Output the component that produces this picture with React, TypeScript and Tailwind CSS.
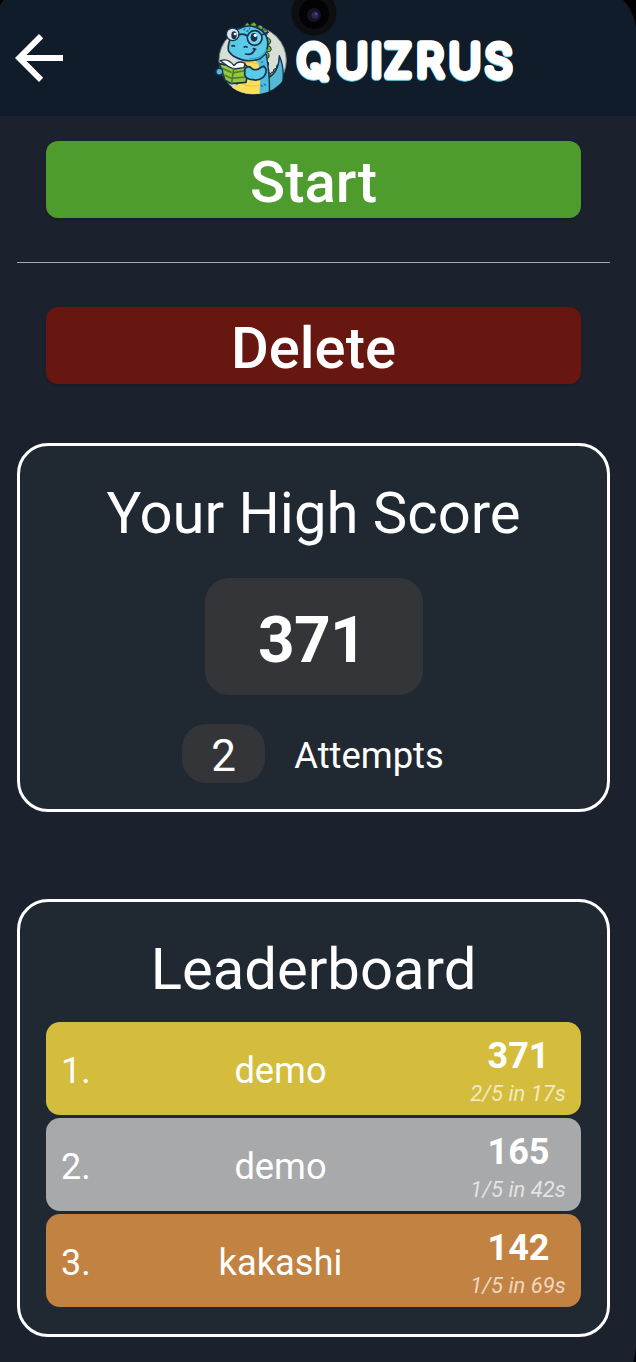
import React from "react";

function Dino() {
  return (
    <svg viewBox="0 0 234 240" className="h-[80px] w-[78px] shrink-0" strokeLinecap="round" strokeLinejoin="round">
      <defs>
        <clipPath id="badge">
          <path d="M0 0H234V120A103 103 0 0 1 125 228A103 103 0 0 1 20 145L0 140Z" />
        </clipPath>
      </defs>
      <circle cx="122" cy="127" r="101" fill="#d8e0d5" stroke="#77818d" strokeWidth="3" />
      <g clipPath="url(#badge)">
        <g fill="#7caf2c" stroke="#17314e" strokeWidth="3">
          <path d="M97 28Q99 14 107 14Q113 16 113 26Q117 12 127 13Q136 17 133 28Q144 17 150 23Q157 29 150 38Q164 31 166 40Q168 50 160 55L150 64L96 39Z" />
          <path d="M158 59Q173 57 176 68Q178 77 166 82Q178 84 178 94Q176 104 164 102Q174 108 171 117Q167 127 158 121V80Z" />
          <path d="M156 127Q170 128 170 138Q169 145 163 147Q174 152 170 163Q179 166 177 174Q174 185 160 180Z" />
          <path d="M174 174Q173 161 183 163Q183 151 193 151Q191 141 202 137L199 171L170 190Z" />
        </g>
        <path d="M202 113C201 148 187 170 168 180L158 225H200C220 190 216 145 202 113Z" fill="#53b9d5" stroke="#17314e" strokeWidth="4" />
        <path d="M98 120C104 160 88 185 72 205V240H171C174 210 172 165 163 109Z" fill="#4fbddb" stroke="#17314e" strokeWidth="4" />
        <path d="M94 130C112 124 128 126 139 134L145 174L142 240H60V208C92 197 105 171 96 130Z" fill="#ffde5b" />
        <path d="M99 133Q119 132 136 137M102 151Q120 151 140 156M96 201Q117 207 141 203" fill="none" stroke="#edbd42" strokeWidth="3" />
        <path d="M81 32C111 15 149 27 163 55C173 77 165 109 144 122C111 136 67 125 50 100C44 75 60 53 67 44Q72 32 81 32Z" fill="#5acbe7" stroke="#17314e" strokeWidth="5" />
        <path d="M113 122Q150 124 163 96" fill="none" stroke="#39a6c8" strokeWidth="5" />
        <circle cx="62" cy="49" r="19" fill="#dde7e9" stroke="#17314e" strokeWidth="4" />
        <circle cx="128" cy="60" r="22" fill="#74d8ec" stroke="#17314e" strokeWidth="5" />
        <path d="M81 51Q94 44 106 54M150 50L168 43" fill="none" stroke="#17314e" strokeWidth="5" />
        <ellipse cx="66" cy="52" rx="8" ry="12" fill="#17314e" />
        <ellipse cx="126" cy="58" rx="10" ry="13" fill="#17314e" />
        <circle cx="69" cy="48" r="4" fill="#fff" />
        <circle cx="130" cy="52" r="5" fill="#fff" />
        <path d="M101 108Q121 113 128 95M124 92L131 94M60 84Q64 82 67 84M97 87Q101 84 105 87" fill="none" stroke="#17314e" strokeWidth="5" />
        <path d="M96 35L98 33M105 40L107 38M112 33L113 31M149 132H151M155 143H156M148 202L150 205M157 199L160 201" stroke="#287b9c" strokeWidth="5" />
      </g>
      <path d="M22 137L39 187L58 197L102 193L110 149L94 136L66 146Z" fill="#93c83c" stroke="#17314e" strokeWidth="5" />
      <path d="M25 128Q48 119 66 143Q79 125 99 136L96 149L66 153L48 145Z" fill="#fff" stroke="#17314e" strokeWidth="4" />
      <path d="M65 151L59 195M29 150L57 163M67 164L107 156M38 172L58 181L101 177" fill="none" stroke="#537f2d" strokeWidth="5" />
      <circle cx="22" cy="161" r="10" fill="#4fbddb" stroke="#17314e" strokeWidth="4" />
      <path d="M99 152Q109 140 120 152Q134 160 147 148Q157 142 162 154C164 176 143 190 122 185Q101 184 98 170Z" fill="#5acbe7" stroke="#17314e" strokeWidth="5" />
    </svg>
  );
}

function WordMark() {
  const letterX = "313.5 352 376.5 398 430 465 498.5";
  return (
    <svg
      viewBox="290 32 230 56"
      className="h-[56px] w-[230px] shrink-0 font-[Inter,sans-serif] text-[43px] font-extralight"
      textAnchor="middle"
      strokeWidth="7.5"
      strokeLinejoin="round"
      strokeLinecap="round"
    >
      <text x={letterX} y="77.4" fill="#65cee0" stroke="#65cee0" aria-hidden="true">QUIZRUS</text>
      <text x={letterX} y="76" fill="#fff" stroke="#fff">QUIZRUS</text>
    </svg>
  );
}

const leaders = [
  { name: "demo", score: 371, detail: "2/5 in 17s", color: "bg-[#d4bc3d]" },
  { name: "demo", score: 165, detail: "1/5 in 42s", color: "bg-[#a7a9ab]" },
  { name: "kakashi", score: 142, detail: "1/5 in 69s", color: "bg-[#c28241]" },
];

export default function App() {
  return (
    <div className="h-[1362px] w-[636px] overflow-hidden font-[Roboto,sans-serif] text-white">
      <main className="relative h-full overflow-hidden bg-[#1b212d]">
        <header className="flex h-[116px] bg-[#101c29] pl-[15px]">
          <button aria-label="Back" className="mt-[34px] h-[48px] w-[48px]">
            <svg viewBox="0 0 48 48" className="h-full w-full"><path d="M48 21H11.5L28.2 4.2L24 0L0 24L24 48L28.2 43.8L11.5 27H48Z" fill="#fff" /></svg>
          </button>
          <div className="ml-[149px] mt-[18px]"><Dino /></div>
          <div className="mt-[32px]"><WordMark /></div>
        </header>
        <svg viewBox="0 0 50 40" className="absolute left-[289px] top-0 h-[40px] w-[50px]">
          <circle cx="25" cy="13" r="22.5" fill="#0d0e10" />
          <circle cx="25" cy="14" r="15" fill="#020304" />
          <circle cx="25" cy="15" r="7" fill="#171421" />
          <circle cx="26" cy="15" r="3.5" fill="#2e2656" />
          <circle cx="27" cy="14" r="1.3" fill="#5842a0" />
        </svg>
        <svg viewBox="0 0 4 6" className="absolute left-0 top-0 h-[6px] w-[4px]"><path d="M0 0H3.5L0 5.5Z" fill="#000" /></svg>
        <svg viewBox="0 0 14 28" className="absolute right-0 top-0 h-[28px] w-[14px]"><path d="M1 0H14V27Q11 9 1 0Z" fill="#000" /></svg>
        <svg viewBox="0 0 4 16" className="absolute bottom-0 right-0 h-[16px] w-[4px]"><path d="M4 0V16H1.5Q3.5 9 4 0Z" fill="#000" /></svg>

        <div className="ml-[17px] flex w-[593px] flex-col">
          <button className="mx-[29px] mt-[24.5px] flex h-[77px] items-center justify-center rounded-[12px] bg-[#4f9c2e] pt-[6px] text-[58px] leading-none font-medium shadow-sm">Start</button>
          <hr className="mt-[44.5px] border-0 border-t border-[#aaa5aa]" />
          <button className="mx-[29px] mt-[44px] flex h-[77px] items-center justify-center rounded-[12px] bg-[#681610] pt-[5px] text-[58px] leading-none font-medium shadow-sm">Delete</button>

          <section className="mt-[59px] flex h-[369px] flex-col items-center rounded-[31px] border-[3px] border-white bg-[#202831]">
            <h1 className="mt-[33px] text-[58px] leading-[68px]">Your High Score</h1>
            <div className="mt-[31px] flex h-[117px] w-[218px] items-center justify-center rounded-[24px] bg-[#333539] pt-[8px] pr-[3px] text-[64px] leading-none font-bold tracking-[-0.8px]">371</div>
            <div className="mt-[29px] flex items-center gap-[29px] pr-px">
              <span className="flex h-[59px] w-[83px] items-center justify-center rounded-[24px] bg-[#333539] pt-[4px] text-[44px] leading-none">2</span>
              <span className="pt-[5px] text-[36.4px] leading-none">Attempts</span>
            </div>
          </section>

          <section className="mt-[87px] h-[438px] rounded-[31px] border-[3px] border-white bg-[#202831] px-[26px]">
            <h2 className="mt-[33px] text-center text-[58px] leading-[68px]">Leaderboard</h2>
            <div className="mt-[19px] flex flex-col gap-[3px]">
              {leaders.map((leader, index) => (
                <div key={index} className={`flex h-[93px] rounded-[14px] ${leader.color}`}>
                  <div className="flex w-[60px] items-center pl-[15px] pt-[5px] text-[36px] leading-none">{index + 1}.</div>
                  <div className="flex w-[349px] items-center justify-center pt-[5px] text-[36.3px] leading-none">{leader.name}</div>
                  <div className="flex w-[126px] flex-col items-center pt-[13px]">
                    <strong className="pl-px text-[36px] leading-[42px] font-bold">{leader.score}</strong>
                    <em className="mt-[4px] text-[22px] leading-[26px] text-white/70">{leader.detail}</em>
                  </div>
                </div>
              ))}
            </div>
          </section>
        </div>
      </main>
    </div>
  );
}
